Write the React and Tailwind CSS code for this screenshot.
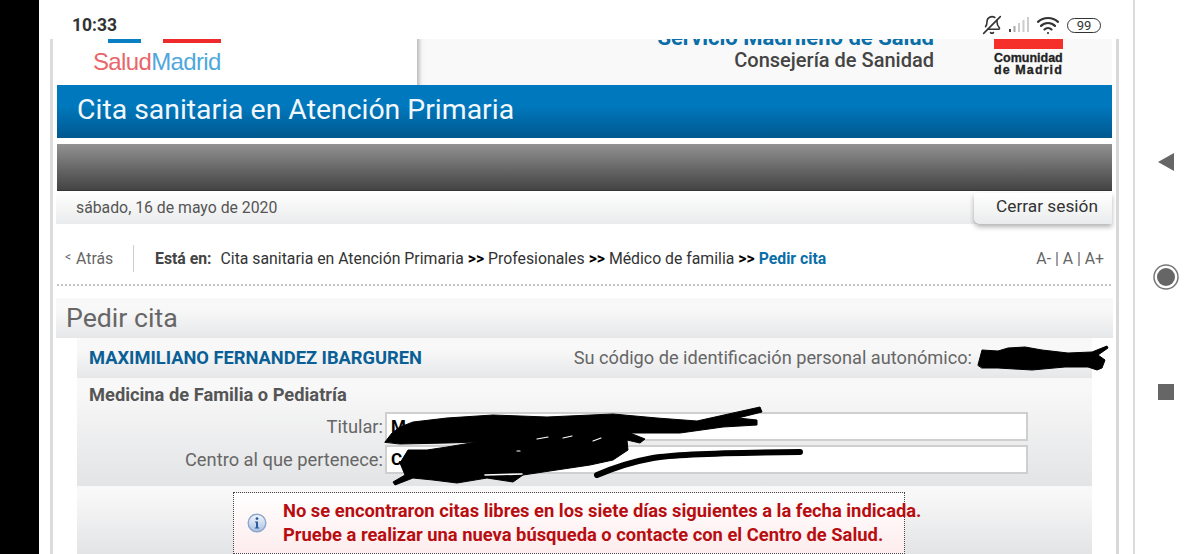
import React from "react";
import { BellOff, Wifi } from "lucide-react";

const crumbs = ["Profesionales", "Médico de familia"];

const StatusBar = () => (
  <div className="flex h-[39px] items-center justify-between pl-[33px] pr-[32px] pt-[11px] text-[#333]">
    <span className="mt-[2px] text-[17.5px] font-bold leading-none">10:33</span>
    <div className="flex items-center">
      <BellOff size={20} strokeWidth={1.9} className="mr-[7px] -scale-x-100" />
      <svg width="20" height="16" viewBox="0 0 20 16" className="mr-[7px]">
        <rect x="0" y="12" width="2" height="3" fill="#444" />
        <rect x="4.5" y="9" width="2" height="6" fill="#aaa" />
        <rect x="9" y="6" width="2" height="9" fill="#ccc" />
        <rect x="13.5" y="3" width="2" height="12" fill="#ccc" />
        <rect x="18" y="0" width="2" height="15" fill="#ccc" />
      </svg>
      <Wifi size={24} strokeWidth={2.2} className="mr-[7px]" />
      <div className="flex h-[15px] w-[34px] items-center justify-center rounded-full border border-[#333] text-[13px] leading-none">
        99
      </div>
    </div>
  </div>
);

const Header = () => (
  <div className="flex h-[46px] overflow-hidden">
    <div className="w-[360px] bg-white">
      <div className="flex h-[4px]">
        <div className="ml-[51px] w-[33px] bg-[#0b7fc4]" />
        <div className="ml-[22px] w-[58px] bg-[#ee2a2a]" />
      </div>
      <div className="mt-[6px] pl-[36px] font-['Liberation_Sans',sans-serif] text-[24px] leading-[26px] tracking-[-0.65px]">
        <span className="text-[#e9666b]">Salud</span>
        <span className="text-[#4fa8dc]">Madrid</span>
      </div>
    </div>
    <div className="flex flex-1 bg-[#f9f9f9] bg-gradient-to-r from-[#bdbdbd] from-0% via-[#f5f5f5] via-[5px] to-[#f9f9f9] to-[10px]">
      <div className="-mt-[16px] w-[517px] text-right text-[20px] font-medium leading-[28px]">
        <div className="text-[22px] font-bold leading-[30px] text-[#0a6ea8]">Servicio Madrileño de Salud</div>
        <div className="-mt-[7px] text-[#444]">Consejería de Sanidad</div>
      </div>
      <div className="ml-[60px] w-[69px]">
        <div className="h-[10px] bg-[#f5302a]" />
        <div className="mt-[3px] whitespace-nowrap font-['Liberation_Sans',sans-serif] text-[12.5px] font-bold leading-[12px] text-[#222] [-webkit-text-stroke:0.3px_#222]">
          <div>Comunidad</div>
          <div className="tracking-[1.1px]">de Madrid</div>
        </div>
      </div>
    </div>
  </div>
);

const Breadcrumb = () => (
  <div className="mr-[1px] flex h-[62px] items-center border-b-2 border-dotted border-[#c4c4c4] pt-[9px] text-[15.8px]">
    <span className="w-[76px] pl-[8px] text-[#666]">
      <span className="relative -top-[3px] mr-[5px] text-[12px]">&lt;</span>Atrás
    </span>
    <div className="h-[27px] w-[1px] bg-[#ccc]" />
    <span className="ml-[21px] font-bold text-[#444]">Está en:</span>
    <span className="ml-[9px] text-[#333]">Cita sanitaria en Atención Primaria</span>
    {crumbs.map((c) => (
      <span key={c} className="text-[#333]">
        <b className="mx-[4px] text-black">&gt;&gt;</b>
        {c}
      </span>
    ))}
    <b className="mx-[4px] text-black">&gt;&gt;</b>
    <span className="font-bold text-[#0a6ea8]">Pedir cita</span>
    <span className="ml-auto mr-[7px] text-[#666]">A- | A | A+</span>
  </div>
);

const Field = ({ label, value }) => (
  <div className="flex h-[29px] items-center">
    <span className="w-[308px] pr-[2px] text-right text-[18.3px] text-[#666]">{label}</span>
    <div className="h-[29px] w-[643px] border-2 border-[#cfcfcf] bg-white pl-[4px] text-[17px] font-bold leading-[25px] text-black">
      {value}
    </div>
  </div>
);

const InfoIcon = () => (
  <svg width="20" height="20" viewBox="0 0 20 20" className="shrink-0">
    <defs>
      <linearGradient id="infoFill" x1="0" y1="0" x2="0" y2="1">
        <stop offset="0" stopColor="#f5f8fd" />
        <stop offset="1" stopColor="#a9c1e2" />
      </linearGradient>
    </defs>
    <circle cx="10" cy="10" r="8.8" fill="url(#infoFill)" stroke="#8aa6cc" strokeWidth="1.4" />
    <circle cx="10" cy="5.6" r="1.4" fill="#2a5a9e" />
    <path d="M8 8.4h3v6h1.2v1.2H7.8v-1.2H9v-4.8H8z" fill="#2a5a9e" />
  </svg>
);

// tachones hechos a mano sobre los datos personales
const Scribbles = () => (
  <svg width="1200" height="554" viewBox="0 0 1200 554" className="pointer-events-none absolute left-0 top-0">
    <g fill="#000" stroke="#000" strokeLinecap="round" strokeLinejoin="round">
      <path
        d="M978 365 L982 350 L998 351 L1008 348 L1025 347 L1042 350 L1068 353 L1092 352 L1107 346 L1108 348 L1098 355 L1105 360 L1102 368 L1097 370 L1088 367 L1065 367 L1032 370 L998 368 L982 368 Z"
        strokeWidth="1"
      />
      <path
        d="M385 442 L392 433 L400 427 L413 422 L447 418 L493 415 L547 417 L613 414 L657 418 L697 421 L733 413 L760 407 L762 412 L738 418 L757 420 L757 425 L723 427 L680 433 L630 433 L645 439 L640 443 L627 440 L628 450 L613 460 L590 465 L523 475 L513 482 L487 478 L457 483 L433 480 L413 478 L395 485 L393 482 L405 475 L400 463 L408 450 L427 450 L447 447 L477 442 L447 443 L400 444 Z"
        strokeWidth="1"
      />
      <path d="M597 475 Q625 463 653 458 T800 452" fill="none" strokeWidth="6" />
    </g>
    <g stroke="#fff" strokeWidth="1.2" strokeLinecap="round">
      <path d="M537 439 L548 437" />
      <path d="M563 438 L572 436" />
      <path d="M593 441 L601 438" />
      <path d="M517 451 L520 451" />
      <path d="M485 475 L522 474" strokeWidth="1.6" />
    </g>
  </svg>
);

const Page = () => (
  <div className="ml-[11px] h-[515px] w-[1069px] overflow-hidden border-x-[3px] border-l-[#dcdcdc] border-r-[#d8d8d8] pl-[4px] pr-[4px]">
    <div className="w-[1055px]">
      <Header />
      <div className="flex h-[53px] items-center bg-gradient-to-b from-[#0078bd] from-40% to-[#00588f] pb-[3px] pl-[20px] text-[28.4px] text-[#f2f7fb]">
        Cita sanitaria en Atención Primaria
      </div>
      <div className="mt-[6px] h-[47px] border-b border-[#333] bg-gradient-to-b from-[#929292] to-[#444]" />
      <div className="-ml-[1px] flex h-[33px] justify-between bg-gradient-to-b from-white to-[#eaebec]">
        <span className="pl-[20px] pt-[5px] text-[15.8px] text-[#555]">sábado, 16 de mayo de 2020</span>
        <div className="mt-[2px] flex h-[31px] w-[138px] justify-center rounded-bl-md bg-gradient-to-b from-white to-[#eaebec] pl-[8px] pt-[1px] text-[17.3px] text-[#333] shadow-[0_3px_5px_rgba(0,0,0,0.3)]">
          Cerrar sesión
        </div>
      </div>
      <Breadcrumb />
      <div className="h-[12px]" />
      <div className="-ml-[1px] h-[40px] w-[1057px] bg-gradient-to-b from-[#f8f8f8] from-30% to-[#e6e7e9] pl-[10px] pt-[1px] text-[26.7px] leading-[38px] text-[#666]">
        Pedir cita
      </div>
      <div className="ml-[20px] w-[1015px]">
        <div className="flex h-[40px] items-center justify-between bg-gradient-to-b from-[#f8f8f8] from-30% to-[#e6e7e9] pl-[12px]">
          <span className="text-[18.3px] font-bold text-[#0a5f96]">MAXIMILIANO FERNANDEZ IBARGUREN</span>
          <span className="mr-[120px] text-[18.2px] text-[#666]">Su código de identificación personal autonómico:</span>
        </div>
        <div className="h-[108px] bg-gradient-to-b from-[#f8f8f8] from-10% to-[#e3e4e6] pt-[7px]">
          <div className="pl-[12px] text-[18.3px] font-bold leading-[20px] text-[#555]">Medicina de Familia o Pediatría</div>
          <div className="mt-[7px] flex flex-col gap-[4px]">
            <Field label="Titular:" value="M" />
            <Field label="Centro al que pertenece:" value="C" />
          </div>
        </div>
        <div className="h-[68px] bg-gradient-to-b from-[#f8f8f8] from-10% to-[#e3e4e6] pt-[6px]">
          <div className="ml-[156px] flex h-[62px] w-[672px] items-center border border-dotted border-[#444] bg-gradient-to-b from-white to-[#fdeced] pl-[13px]">
            <InfoIcon />
            <p className="ml-[16px] whitespace-nowrap text-[18.35px] font-bold leading-[24px] text-[#b80d10]">
              No se encontraron citas libres en los siete días siguientes a la fecha indicada.
              <br />
              Pruebe a realizar una nueva búsqueda o contacte con el Centro de Salud.
            </p>
          </div>
        </div>
      </div>
    </div>
  </div>
);

const SoftKeys = () => (
  <div className="flex flex-1 flex-col items-center pr-[3px] pt-[153px]">
    <svg width="16" height="18" viewBox="0 0 16 18">
      <path d="M16 0v18L0 9z" fill="#666" />
    </svg>
    <svg width="26" height="26" viewBox="0 0 26 26" className="mt-[93px]">
      <circle cx="13" cy="13" r="12" fill="none" stroke="#777" strokeWidth="1.5" />
      <circle cx="13" cy="13" r="9" fill="#666" />
    </svg>
    <div className="mt-[94px] h-[16px] w-[16px] bg-[#666]" />
  </div>
);

export default function App() {
  return (
    <div className="relative flex h-[554px] w-[1200px] overflow-hidden bg-white font-['Roboto',sans-serif]">
      <div className="w-[39px] bg-black" />
      <div className="flex w-[1096px] flex-col border-r-2 border-[#dcdcdc]">
        <StatusBar />
        <Page />
      </div>
      <SoftKeys />
      <Scribbles />
    </div>
  );
}
